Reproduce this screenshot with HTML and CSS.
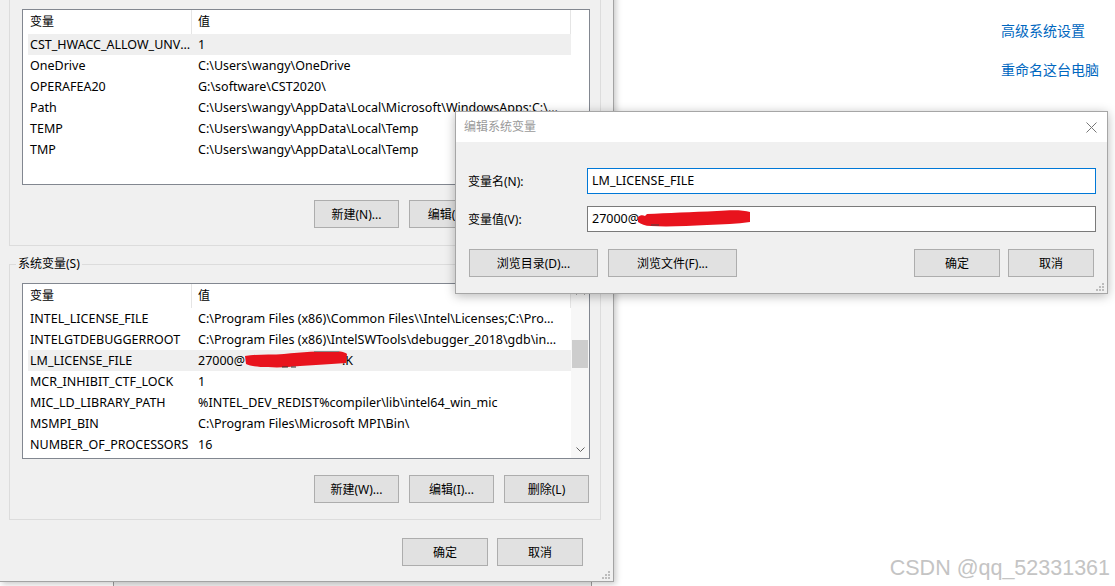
FILE: index.html
```html
<!DOCTYPE html>
<html lang="zh-CN">
<head>
<meta charset="utf-8">
<title>环境变量</title>
<link rel="stylesheet" href="styles.css">
</head>
<body>
<div class="desktop">
  <div class="settings-page">
    <nav class="related-links">
      <a class="link" href="#">高级系统设置</a>
      <a class="link" href="#">重命名这台电脑</a>
    </nav>
  </div>

  <div class="back-window"></div>

  <section class="env-window">
    <fieldset class="group group-user">
      <legend>wangy 的用户变量(U)</legend>
      <div class="listview">
        <div class="lv-content">
          <div class="lv-header"><span class="h-name">变量</span><span class="h-value">值</span></div>
          <div class="lv-row selected"><span class="c-name">CST_HWACC_ALLOW_UNVERIFIED_DRIVERS</span><span class="c-value">1</span></div>
          <div class="lv-row"><span class="c-name">OneDrive</span><span class="c-value">C:\Users\wangy\OneDrive</span></div>
          <div class="lv-row"><span class="c-name">OPERAFEA20</span><span class="c-value">G:\software\CST2020\</span></div>
          <div class="lv-row"><span class="c-name">Path</span><span class="c-value">C:\Users\wangy\AppData\Local\Microsoft\WindowsApps;C:\Users\wangy\AppData\Local\Programs</span></div>
          <div class="lv-row"><span class="c-name">TEMP</span><span class="c-value">C:\Users\wangy\AppData\Local\Temp</span></div>
          <div class="lv-row"><span class="c-name">TMP</span><span class="c-value">C:\Users\wangy\AppData\Local\Temp</span></div>
        </div>
        <div class="lv-noscroll"></div>
      </div>
      <div class="btn-row">
        <button class="btn">新建(N)...</button>
        <button class="btn">编辑(E)...</button>
        <button class="btn">删除(D)</button>
      </div>
    </fieldset>

    <fieldset class="group group-system">
      <legend>系统变量(S)</legend>
      <div class="listview">
        <div class="lv-content">
          <div class="lv-header"><span class="h-name">变量</span><span class="h-value">值</span></div>
          <div class="lv-row"><span class="c-name">INTEL_LICENSE_FILE</span><span class="c-value">C:\Program Files (x86)\Common Files\\Intel\Licenses;C:\Program Files (x86)\Intel\Licenses</span></div>
          <div class="lv-row"><span class="c-name">INTELGTDEBUGGERROOT</span><span class="c-value">C:\Program Files (x86)\IntelSWTools\debugger_2018\gdb\intel64\bin</span></div>
          <div class="lv-row selected"><span class="c-name">LM_LICENSE_FILE</span><span class="c-value">27000@<svg class="scribble-list" width="104" height="18" viewBox="0 0 104 18"><path d="M1 5 C12 3 26 4 40 3 C58 1 76 0 90 0 C96 0 101 1 103 3 L102 12 C88 13 72 14 56 15 C44 16 34 17 24 16 C14 16 6 15 2 13 Z" fill="#e8131d"/><path d="M38 16 L44 16 M47 16 L52 16" stroke="#333" stroke-width="1"/><path d="M70 0.5 L95 0.5" stroke="#888" stroke-width="1"/></svg>.K</span></div>
          <div class="lv-row"><span class="c-name">MCR_INHIBIT_CTF_LOCK</span><span class="c-value">1</span></div>
          <div class="lv-row"><span class="c-name">MIC_LD_LIBRARY_PATH</span><span class="c-value">%INTEL_DEV_REDIST%compiler\lib\intel64_win_mic</span></div>
          <div class="lv-row"><span class="c-name">MSMPI_BIN</span><span class="c-value">C:\Program Files\Microsoft MPI\Bin\</span></div>
          <div class="lv-row"><span class="c-name">NUMBER_OF_PROCESSORS</span><span class="c-value">16</span></div>
        </div>
        <div class="lv-scroll">
          <span class="sb-arrow"><svg width="9" height="5" viewBox="0 0 9 5"><path d="M0.5 4.5 L4.5 0.5 L8.5 4.5" fill="none" stroke="#606060"/></svg></span>
          <div class="sb-track"><div class="sb-thumb"></div></div>
          <span class="sb-arrow"><svg width="9" height="5" viewBox="0 0 9 5"><path d="M0.5 0.5 L4.5 4.5 L8.5 0.5" fill="none" stroke="#606060"/></svg></span>
        </div>
      </div>
      <div class="btn-row">
        <button class="btn">新建(W)...</button>
        <button class="btn">编辑(I)...</button>
        <button class="btn">删除(L)</button>
      </div>
    </fieldset>

    <div class="dialog-buttons">
      <button class="btn btn-wide">确定</button>
      <button class="btn btn-wide">取消</button>
    </div>
    <svg class="grip" width="10" height="10" viewBox="0 0 10 10"><path d="M8 2h2v2H8zM5 5h2v2H5zM8 5h2v2H8zM2 8h2v2H2zM5 8h2v2H5zM8 8h2v2H8z" fill="#bcbcbc"/></svg>
  </section>

  <section class="edit-dialog">
    <header class="dlg-title">
      <span>编辑系统变量</span>
      <svg width="11" height="11" viewBox="0 0 11 11"><path d="M0.5 0.5 L10.5 10.5 M10.5 0.5 L0.5 10.5" stroke="#777" stroke-width="1"/></svg>
    </header>
    <div class="dlg-body">
      <div class="field-row">
        <label class="field-label">变量名(N):</label>
        <div class="input focused">LM_LICENSE_FILE</div>
      </div>
      <div class="field-row">
        <label class="field-label">变量值(V):</label>
        <div class="input">27000@<svg class="scribble-dlg" width="114" height="17" viewBox="0 0 114 17"><path d="M1 7 C3 5 6 5 8 6 L10 4 C30 3 55 2 80 1 C95 0 106 0 113 2 L113 12 C100 14 86 14 70 15 C50 16 30 17 14 16 C8 16 4 14 1 12 Z" fill="#e8131d"/><path d="M14 15 L22 15" stroke="#444" stroke-width="1"/></svg></div>
      </div>
      <div class="dlg-actions">
        <button class="btn btn-browse">浏览目录(D)...</button>
        <button class="btn btn-browse">浏览文件(F)...</button>
        <span class="spacer"></span>
        <button class="btn btn-wide">确定</button>
        <button class="btn btn-wide">取消</button>
      </div>
    </div>
    <svg class="grip" width="10" height="10" viewBox="0 0 10 10"><path d="M8 2h2v2H8zM5 5h2v2H5zM8 5h2v2H8zM2 8h2v2H2zM5 8h2v2H5zM8 8h2v2H8z" fill="#bcbcbc"/></svg>
  </section>

  <div class="watermark">CSDN @qq_52331361</div>
</div>
</body>
</html>
```

FILE: styles.css
```css
* { box-sizing: border-box; }

html, body {
  margin: 0;
  padding: 0;
}

body {
  width: 1115px;
  height: 586px;
  overflow: hidden;
  background: #ffffff;
  font-family: "Noto Sans", "Noto Sans CJK SC", sans-serif;
  font-size: 12px;
  color: #000;
}

.desktop {
  position: relative;
  width: 1115px;
  height: 586px;
  overflow: hidden;
}

/* background settings page */
.settings-page {
  display: flex;
  justify-content: flex-end;
  height: 100%;
}

.related-links {
  width: 114px;
  padding-top: 20px;
  display: flex;
  flex-direction: column;
  gap: 19px;
}

.link {
  font-family: "Noto Sans CJK SC", sans-serif;
  font-size: 14px;
  line-height: 20px;
  color: #0067c0;
  text-decoration: none;
}

.back-window {
  position: absolute;
  left: 113px;
  top: 520px;
  width: 479px;
  height: 120px;
  background: #f0f0f0;
  border: 1px solid #9c9c9c;
}

/* environment variables window */
.env-window {
  position: absolute;
  left: 0;
  top: -30px;
  width: 614px;
  height: 612px;
  background: #f0f0f0;
  border-right: 1px solid #a3a3a3;
  border-bottom: 1px solid #a3a3a3;
  box-shadow: 2px 2px 6px rgba(0, 0, 0, 0.22);
  padding: 11px 0 0 9px;
  display: flex;
  flex-direction: column;
}

.group {
  margin: 0;
  width: 592px;
  min-inline-size: 0;
  border: 1px solid #dcdcdc;
  padding: 11px 10px 17px 12px;
}

.group-user {
  padding-top: 12px;
}

.group-user .btn-row {
  margin-top: 15px;
}

.group-system {
  margin-top: 10px;
  padding-bottom: 16px;
}

.group legend {
  padding: 0 2px;
  margin-left: -6px;
  font-size: 12px;
  line-height: 16px;
}

.listview {
  display: flex;
  height: 176px;
  border: 1px solid #828790;
  background: #fff;
}

.lv-content {
  width: 548px;
  overflow: hidden;
}

.lv-noscroll {
  flex: 1;
}

.lv-header {
  display: flex;
  height: 24px;
  line-height: 24px;
}

.h-name {
  width: 169px;
  padding-left: 7px;
  border-right: 1px solid #e5e5e5;
}

.h-value {
  flex: 1;
  padding-left: 6px;
  border-right: 1px solid #e5e5e5;
}

.lv-row {
  display: flex;
  height: 21px;
  line-height: 21px;
  margin-left: 5px;
  white-space: nowrap;
  font-size: 12.5px;
}

.lv-row.selected {
  background: #efefef;
}

.c-name {
  width: 170px;
  flex: none;
  padding: 0 6px 0 2px;
  overflow: hidden;
  text-overflow: ellipsis;
}

.c-value {
  flex: 1;
  min-width: 0;
  padding-right: 12px;
  overflow: hidden;
  text-overflow: ellipsis;
}

.scribble-list {
  vertical-align: middle;
  margin: -3px -6px 0 -1px;
}

.lv-scroll {
  flex: 1;
  display: flex;
  flex-direction: column;
  background: #f7f7f7;
}

.sb-arrow {
  height: 17px;
  display: flex;
  align-items: center;
  justify-content: center;
}

.sb-track {
  flex: 1;
  padding: 39px 1px 0 1px;
}

.sb-thumb {
  height: 28px;
  background: #cdcdcd;
}

.btn-row {
  display: flex;
  justify-content: flex-end;
  gap: 10px;
  margin-top: 16px;
  margin-right: 1px;
}

.btn {
  width: 85px;
  height: 28px;
  padding: 0;
  background: #e1e1e1;
  border: 1px solid #adadad;
  font-family: "Noto Sans", "Noto Sans CJK SC", sans-serif;
  font-size: 12px;
  color: #000;
  white-space: nowrap;
}

.btn-wide {
  width: 86px;
}

.btn-browse {
  width: 129px;
}

.dialog-buttons {
  display: flex;
  justify-content: flex-end;
  gap: 9px;
  margin-top: 18px;
  padding-right: 30px;
}

.grip {
  position: absolute;
  right: 3px;
  bottom: 2px;
}

/* edit dialog */
.edit-dialog {
  position: absolute;
  left: 455px;
  top: 111px;
  width: 653px;
  height: 183px;
  background: #f0f0f0;
  border: 1px solid #a6a6a6;
  box-shadow: 0 2px 10px rgba(0, 0, 0, 0.28);
  display: flex;
  flex-direction: column;
}

.dlg-title {
  height: 30px;
  background: #fff;
  display: flex;
  align-items: center;
  justify-content: space-between;
  padding: 0 10px 3px 8px;
  color: #9a9a9a;
  font-family: "Noto Sans CJK SC", sans-serif;
}

.dlg-title svg {
  margin-top: 3px;
}

.dlg-body {
  padding: 26px 11px 16px 12px;
  display: flex;
  flex-direction: column;
  gap: 12px;
}

.field-row {
  display: flex;
  align-items: center;
}

.field-label {
  width: 119px;
  flex: none;
}

.input {
  flex: 1;
  min-width: 0;
  height: 26px;
  line-height: 23px;
  padding-left: 4px;
  background: #fff;
  border: 1px solid #7a7a7a;
  white-space: nowrap;
  overflow: hidden;
  font-size: 12.5px;
}

.input.focused {
  border-color: #0078d7;
}

.scribble-dlg {
  vertical-align: middle;
  margin-top: -2px;
  margin-left: -2px;
}

.dlg-actions {
  display: flex;
  gap: 10px;
  margin-top: 5px;
  padding-left: 1px;
  padding-right: 2px;
}

.dlg-actions .btn-wide + .btn-wide {
  margin-left: -2px;
}

.spacer {
  flex: 1;
}

.watermark {
  position: absolute;
  right: 5px;
  bottom: 7px;
  font-family: "Liberation Sans", sans-serif;
  font-size: 21.5px;
  line-height: 22px;
  color: #c4c4c4;
}
```
